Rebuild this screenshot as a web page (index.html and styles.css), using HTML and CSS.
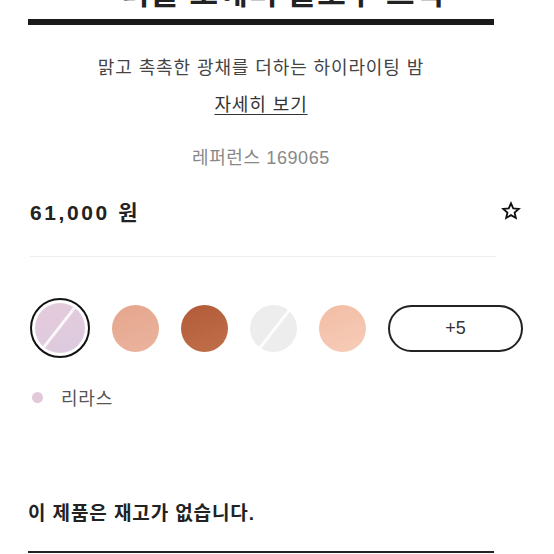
FILE: index.html
```html
<!DOCTYPE html>
<html lang="ko">
<head>
  <meta charset="UTF-8">
  <meta name="viewport" content="width=device-width, initial-scale=1.0">
  <title>상품 상세</title>
  <link rel="stylesheet" href="styles.css">
</head>
<body>
  <div class="product">
    <div class="head">
      <h1 class="title">디올 포에버 글로우 스틱</h1>
    </div>

    <p class="desc">맑고 촉촉한 광채를 더하는 하이라이팅 밤</p>
    <p class="more"><a href="#">자세히 보기</a></p>
    <p class="ref">레퍼런스 169065</p>

    <div class="price-row">
      <span class="price">61,000 원</span>
      <svg class="star" width="20" height="20" viewBox="0 0 24 24">
        <path d="M12 2.8l2.7 6.1 6.6.6-5 4.4 1.5 6.5L12 17l-5.8 3.4 1.5-6.5-5-4.4 6.6-.6z" fill="none" stroke="#111" stroke-width="2.2" stroke-linejoin="miter"/>
      </svg>
    </div>

    <hr class="divider">

    <div class="swatches">
      <span class="swatch-wrap selected"><span class="swatch big lilac slash"></span></span>
      <span class="swatch peach"></span>
      <span class="swatch brown"></span>
      <span class="swatch pearl slash"></span>
      <span class="swatch apricot"></span>
      <button class="more-btn">+5</button>
    </div>

    <div class="shade">
      <span class="dot"></span>
      <span>리라스</span>
    </div>

    <p class="stock">이 제품은 재고가 없습니다.</p>
    <hr class="bottom-rule">
  </div>
</body>
</html>
```

FILE: styles.css
```css
body { margin: 0; background: #fff; font-family: "Liberation Sans", "Noto Sans CJK KR", sans-serif; color: #222; overflow: hidden; }
.product { padding-left: 28px; width: 500px; }

.head { width: 466px; border-bottom: 6px solid #1a1a1a; height: 19px; overflow: hidden; }
.title { margin: -26px 0 0 0; font-size: 31px; line-height: 40px; font-weight: 700; text-align: center; padding-left: 44px; letter-spacing: 1px; }

.desc { width: 466px; text-align: center; margin: 30px 0 0; font-size: 18px; line-height: 26px; color: #444; letter-spacing: 0.9px; }
.more { width: 466px; text-align: center; margin: 11px 0 0; font-size: 18px; line-height: 26px; letter-spacing: 0.9px; }
.more a { color: #333; text-decoration: underline; text-underline-offset: 3px; text-decoration-thickness: 1px; }
.ref { width: 466px; text-align: center; margin: 27px 0 0; font-size: 18px; line-height: 26px; color: #888; letter-spacing: 0.6px; }

.price-row { display: flex; justify-content: space-between; align-items: center; width: 494px; margin-top: 25px; }
.price { font-weight: 700; font-size: 21px; letter-spacing: 2.6px; padding-left: 2px; }
.star { margin-right: 1px; }

.divider { width: 466px; margin: 30px 0 0 2px; border: 0; border-top: 1px solid #eee; }

.swatches { display: flex; align-items: center; gap: 22px; margin-top: 41px; margin-left: 2px; }
.swatch { width: 47px; height: 47px; border-radius: 50%; display: block; flex-shrink: 0; position: relative; overflow: hidden; }
.swatch.big { width: 50px; height: 50px; }
.swatch-wrap { width: 56px; height: 56px; border-radius: 50%; display: flex; align-items: center; justify-content: center; flex-shrink: 0; }
.selected { border: 2px solid #111; }
.lilac { background: linear-gradient(160deg, #e5cbdb, #dccadf); }
.peach { background: linear-gradient(160deg, #e6a58c, #eab49e); }
.brown { background: linear-gradient(160deg, #b35a38, #c0704a); }
.pearl { background: #ededee; }
.apricot { background: linear-gradient(160deg, #f3bca4, #f6cdb9); }
.slash::after { content: ""; position: absolute; left: -5px; top: 22px; width: 60px; height: 3px; background: #fff; opacity: 0.85; transform: rotate(-52deg); }

.more-btn { width: 135px; height: 47px; border: 2px solid #222; border-radius: 24px; background: #fff; font-family: "Liberation Sans", sans-serif; font-size: 18px; color: #333; flex-shrink: 0; }

.shade { display: flex; align-items: center; gap: 18px; margin-top: 26px; margin-left: 4px; font-size: 18px; color: #555; letter-spacing: 0.8px; }
.dot { width: 11px; height: 11px; border-radius: 50%; background: #e2c9d8; }

.stock { margin: 88px 0 0; font-size: 19px; font-weight: 700; color: #222; letter-spacing: 0.9px; }
.bottom-rule { width: 466px; margin: 26px 0 0; border: 0; border-top: 2px solid #222; }
```
